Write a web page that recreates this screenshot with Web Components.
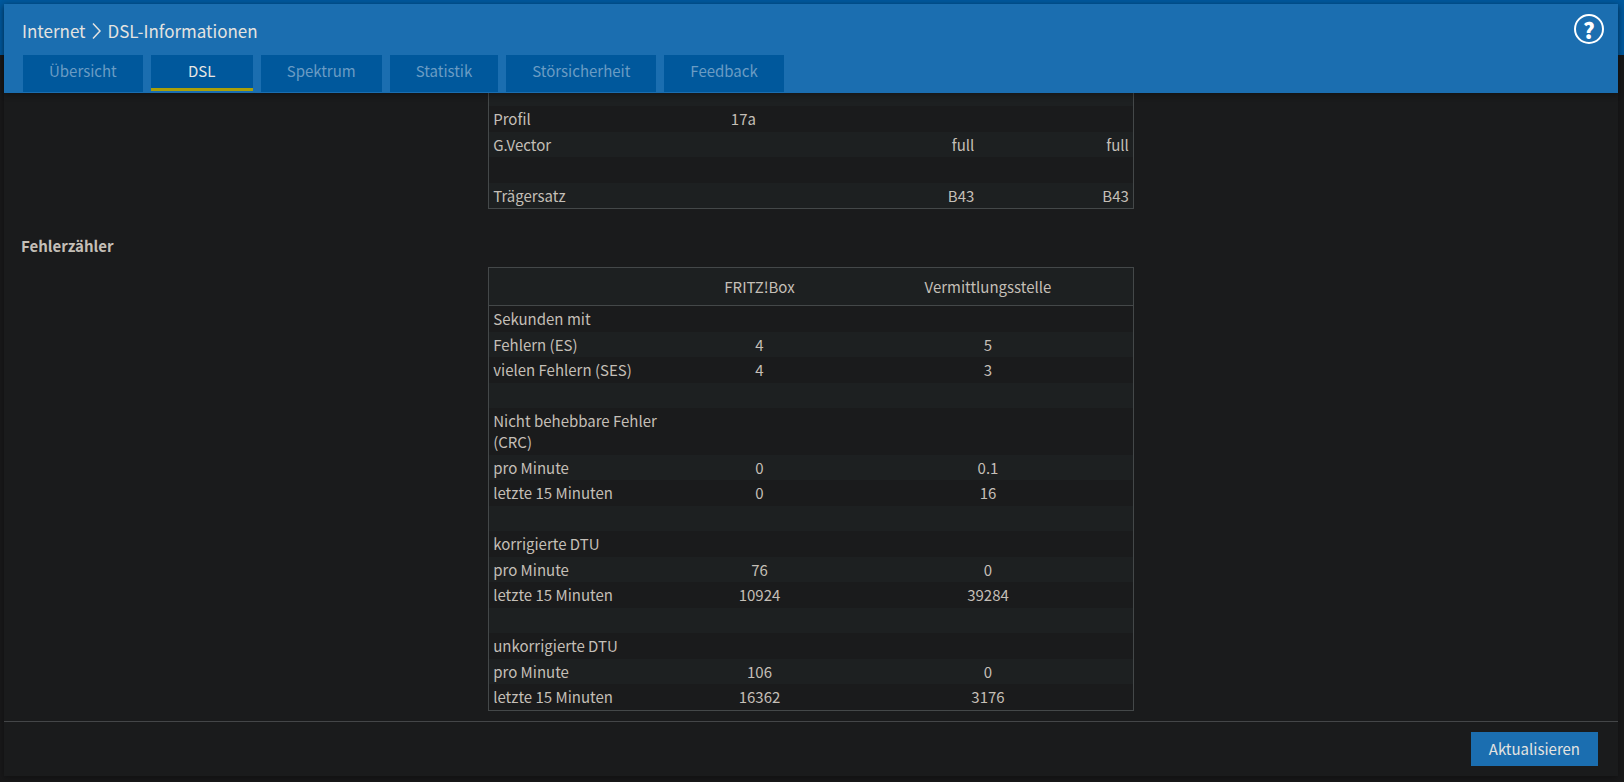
<!DOCTYPE html>
<html lang="de">
<head>
<meta charset="utf-8">
<title>DSL-Informationen</title>
<style>
  body {
    margin: 0;
    background: #181819;
    color: #c4bfb7;
    font-family: "Noto Sans CJK SC", "Noto Sans", sans-serif;
    font-size: 15px;
  }
</style>
</head>
<body>
<box-page>
  <page-header slot="header" section="Internet" heading="DSL-Informationen">
    <nav-tab>Übersicht</nav-tab>
    <nav-tab active>DSL</nav-tab>
    <nav-tab>Spektrum</nav-tab>
    <nav-tab>Statistik</nav-tab>
    <nav-tab>Störsicherheit</nav-tab>
    <nav-tab>Feedback</nav-tab>
  </page-header>
  <line-table></line-table>
  <section-title>Fehlerzähler</section-title>
  <error-table></error-table>
  <action-button slot="footer">Aktualisieren</action-button>
</box-page>

<script>
class BoxPage extends HTMLElement {
  constructor() {
    super();
    this.attachShadow({ mode: 'open' });
    this.shadowRoot.innerHTML = `
      <style>
        :host {
          display: flex;
          flex-direction: column;
          box-sizing: border-box;
          height: 100vh;
          padding: 4px 6px 6px 4px;
          background: linear-gradient(#00589c 55px, transparent 55px);
        }

        .card {
          flex: 1;
          min-height: 0;
          display: flex;
          flex-direction: column;
          background: #1a1b1c;
          box-shadow: 0 2px 6px rgba(0, 0, 0, 0.3);
        }

        /* reversed, so that the page opens at the end of its content */
        main {
          flex: 1;
          min-height: 0;
          display: flex;
          flex-direction: column-reverse;
          overflow-y: auto;
          scrollbar-width: none;
        }

        .content {
          padding-bottom: 10px;
        }

        footer {
          display: flex;
          justify-content: flex-end;
          padding: 10px 20px;
          border-top: 1px solid #444648;
        }
      </style>
      <div class="card">
        <slot name="header"></slot>
        <main><div class="content"><slot></slot></div></main>
        <footer><slot name="footer"></slot></footer>
      </div>
    `;
  }
}

class PageHeader extends HTMLElement {
  constructor() {
    super();
    this.attachShadow({ mode: 'open' });
  }

  connectedCallback() {
    this.shadowRoot.innerHTML = `
      <style>
        :host {
          display: block;
          position: relative;
          z-index: 1;
          background: #1b6eb0;
          color: #e4e3e0;
          box-shadow: 0 2px 6px rgba(0, 0, 0, 0.3);
        }

        .top {
          display: flex;
          justify-content: space-between;
          align-items: flex-start;
          height: 41px;
          padding: 10px 14px 0 18px;
        }

        h1 {
          display: flex;
          align-items: center;
          gap: 6px;
          margin: 4px 0 0;
          font-size: 17px;
          font-weight: 400;
          line-height: 26px;
        }

        button {
          box-sizing: border-box;
          width: 30px;
          height: 30px;
          padding: 0;
          border: 2px solid #fff;
          border-radius: 50%;
          background: none;
          color: #fff;
          font: 900 22px/24px "Noto Sans CJK SC", "Noto Sans", sans-serif;
          cursor: pointer;
        }

        nav {
          display: flex;
          gap: 8px;
          padding: 0 19px 1px;
        }
      </style>
      <div class="top">
        <h1>
          <span>${this.getAttribute('section')}</span>
          <svg width="10" height="18" viewBox="0 0 10 18" fill="none" stroke="currentColor" stroke-width="1.5" aria-hidden="true">
            <path d="M1 1.5 L8 9 L1 16.5"/>
          </svg>
          <span>${this.getAttribute('heading')}</span>
        </h1>
        <button type="button" title="Hilfe">?</button>
      </div>
      <nav><slot></slot></nav>
    `;
  }
}

class NavTab extends HTMLElement {
  constructor() {
    super();
    this.attachShadow({ mode: 'open' });
    this.shadowRoot.innerHTML = `
      <style>
        :host {
          display: block;
        }

        a {
          display: block;
          box-sizing: border-box;
          min-width: 102px;
          height: 37px;
          padding: 0 26px;
          background: #00589c;
          color: #6a9cc4;
          font-size: 15px;
          line-height: 32px;
          text-align: center;
          text-decoration: none;
        }

        :host([active]) a {
          height: 36px;
          border-bottom: 3px solid #aaa00a;
          color: #e8e6e3;
        }
      </style>
      <a href="#"><slot></slot></a>
    `;
  }
}

class SectionTitle extends HTMLElement {
  constructor() {
    super();
    this.attachShadow({ mode: 'open' });
    this.shadowRoot.innerHTML = `
      <style>
        :host {
          display: block;
          padding: 27px 17px 11px;
        }

        h2 {
          margin: 0;
          font-size: 15px;
          font-weight: 700;
          line-height: 20px;
        }
      </style>
      <h2><slot></slot></h2>
    `;
  }
}

const tableStyle = `
  :host {
    display: block;
  }

  table {
    box-sizing: border-box;
    width: 40%;
    margin: 0 auto;
    border: 1px solid #444849;
    border-spacing: 0;
    table-layout: fixed;
    line-height: 21px;
  }

  td, th {
    padding: 2px 4px 3px;
    font-weight: 400;
    text-align: center;
    vertical-align: top;
  }

  td:empty::before {
    content: "\\00a0";
  }

  tbody th {
    text-align: left;
  }

  tbody tr:nth-child(even) > * {
    padding-bottom: 2px;
  }

  thead tr, tbody tr:nth-child(even) {
    background: #1d2021;
  }

  thead > tr > * {
    padding: 8px 4px;
    border-bottom: 1px solid #444849;
  }
`;

const buildRows = (rows) => rows.map(([label, ...cells]) => `
  <tr>
    ${label ? `<th scope="row">${label}</th>` : '<td></td>'}
    ${cells.map((cell) => `<td>${cell}</td>`).join('')}
  </tr>
`).join('');

class LineTable extends HTMLElement {
  constructor() {
    super();
    this.attachShadow({ mode: 'open' });
    const rows = [
      ['', '', '', ''],
      ['', '', '', ''],
      ['Profil', '17a', '', ''],
      ['G.Vector', '', 'full', 'full'],
      ['', '', '', ''],
      ['Trägersatz', '', 'B43', 'B43'],
    ];
    this.shadowRoot.innerHTML = `
      <style>
        ${tableStyle}
        td:nth-child(n + 3) {
          text-align: right;
        }
      </style>
      <table>
        <colgroup>
          <col style="width: 30%"><col style="width: 19%"><col style="width: 27%"><col style="width: 24%">
        </colgroup>
        <tbody>${buildRows(rows)}</tbody>
      </table>
    `;
  }
}

class ErrorTable extends HTMLElement {
  constructor() {
    super();
    this.attachShadow({ mode: 'open' });
    const rows = [
      ['Sekunden mit', '', ''],
      ['Fehlern (ES)', '4', '5'],
      ['vielen Fehlern (SES)', '4', '3'],
      ['', '', ''],
      ['Nicht behebbare Fehler (CRC)', '', ''],
      ['pro Minute', '0', '0.1'],
      ['letzte 15 Minuten', '0', '16'],
      ['', '', ''],
      ['korrigierte DTU', '', ''],
      ['pro Minute', '76', '0'],
      ['letzte 15 Minuten', '10924', '39284'],
      ['', '', ''],
      ['unkorrigierte DTU', '', ''],
      ['pro Minute', '106', '0'],
      ['letzte 15 Minuten', '16362', '3176'],
    ];
    this.shadowRoot.innerHTML = `
      <style>${tableStyle}</style>
      <table>
        <colgroup>
          <col style="width: 29%"><col style="width: 26%"><col style="width: 45%">
        </colgroup>
        <thead>
          <tr><td></td><th scope="col">FRITZ!Box</th><th scope="col">Vermittlungsstelle</th></tr>
        </thead>
        <tbody>${buildRows(rows)}</tbody>
      </table>
    `;
  }
}

class ActionButton extends HTMLElement {
  constructor() {
    super();
    this.attachShadow({ mode: 'open' });
    this.shadowRoot.innerHTML = `
      <style>
        :host {
          display: block;
        }

        button {
          display: block;
          height: 34px;
          padding: 0 18px;
          border: 0;
          background: #1b6eb0;
          color: #e4e3e0;
          font-family: inherit;
          font-size: 15px;
          line-height: 34px;
          cursor: pointer;
        }
      </style>
      <button type="button"><slot></slot></button>
    `;
  }
}

customElements.define('box-page', BoxPage);
customElements.define('page-header', PageHeader);
customElements.define('nav-tab', NavTab);
customElements.define('section-title', SectionTitle);
customElements.define('line-table', LineTable);
customElements.define('error-table', ErrorTable);
customElements.define('action-button', ActionButton);
</script>
</body>
</html>
